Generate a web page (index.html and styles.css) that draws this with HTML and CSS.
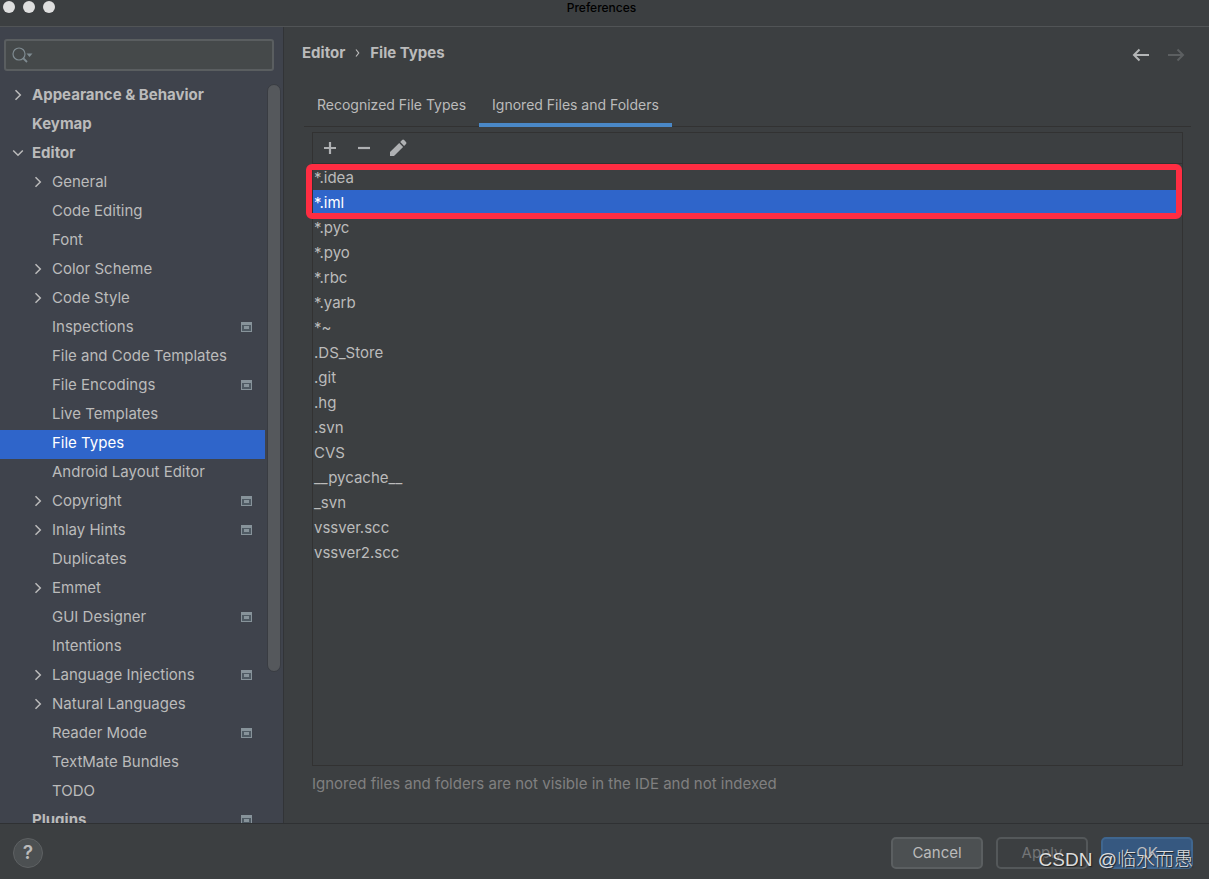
FILE: index.html
```html
<!DOCTYPE html>
<html lang="en">
<head>
<meta charset="utf-8">
<title>Preferences</title>
<link rel="stylesheet" href="styles.css">
</head>
<body>
<svg class="defs" aria-hidden="true">
  <symbol id="chev" viewBox="0 0 12 12"><path d="M3.5 1.2 8.3 6 3.5 10.8" fill="none" stroke="currentColor" stroke-width="1.5"/></symbol>
  <symbol id="chev-down" viewBox="0 0 12 12"><path d="M1.2 3.5 6 8.3 10.8 3.5" fill="none" stroke="currentColor" stroke-width="1.5"/></symbol>
  <symbol id="proj" viewBox="0 0 11 10"><path fill="#87939a" fill-rule="evenodd" d="M0 0h11v10H0zM1 3v6h9V3z"/><path fill="#4f5a63" d="M1 3h9v6H1z"/><path fill="#87939a" d="M3 4h5v3H3z"/></symbol>
</svg>
<header class="titlebar">
  <div class="lights"><span class="light"></span><span class="light"></span><span class="light"></span></div>
  <h1 class="title">Preferences</h1>
</header>
<div class="body">
  <aside class="sidebar">
    <label class="search">
      <svg class="search-icon" viewBox="0 0 22 16" aria-hidden="true"><g fill="none" stroke="#7f8b91" stroke-width="1.2"><circle cx="7" cy="7" r="6"/><path d="m11 11 4 4" stroke-width="1.8"/></g><path d="M14.500 6.500h6L17.500 10z" fill="#7f8b91"/></svg>
      <input class="search-input" type="text" aria-label="Search settings">
    </label>
    <div class="tree-wrap">
      <nav class="tree" aria-label="Settings">
        <a href="#" class="row top"><svg class="chev"><use href="#chev"/></svg><span>Appearance &amp; Behavior</span></a>
        <a href="#" class="row top"><i class="chev"></i><span>Keymap</span></a>
        <a href="#" class="row top"><svg class="chev"><use href="#chev-down"/></svg><span>Editor</span></a>
        <a href="#" class="row"><svg class="chev"><use href="#chev"/></svg><span>General</span></a>
        <a href="#" class="row"><i class="chev"></i><span>Code Editing</span></a>
        <a href="#" class="row"><i class="chev"></i><span>Font</span></a>
        <a href="#" class="row"><svg class="chev"><use href="#chev"/></svg><span>Color Scheme</span></a>
        <a href="#" class="row"><svg class="chev"><use href="#chev"/></svg><span>Code Style</span></a>
        <a href="#" class="row"><i class="chev"></i><span>Inspections</span><svg class="proj"><use href="#proj"/></svg></a>
        <a href="#" class="row"><i class="chev"></i><span>File and Code Templates</span></a>
        <a href="#" class="row"><i class="chev"></i><span>File Encodings</span><svg class="proj"><use href="#proj"/></svg></a>
        <a href="#" class="row"><i class="chev"></i><span>Live Templates</span></a>
        <a href="#" class="row selected" aria-current="page"><i class="chev"></i><span>File Types</span></a>
        <a href="#" class="row"><i class="chev"></i><span>Android Layout Editor</span></a>
        <a href="#" class="row"><svg class="chev"><use href="#chev"/></svg><span>Copyright</span><svg class="proj"><use href="#proj"/></svg></a>
        <a href="#" class="row"><svg class="chev"><use href="#chev"/></svg><span>Inlay Hints</span><svg class="proj"><use href="#proj"/></svg></a>
        <a href="#" class="row"><i class="chev"></i><span>Duplicates</span></a>
        <a href="#" class="row"><svg class="chev"><use href="#chev"/></svg><span>Emmet</span></a>
        <a href="#" class="row"><i class="chev"></i><span>GUI Designer</span><svg class="proj"><use href="#proj"/></svg></a>
        <a href="#" class="row"><i class="chev"></i><span>Intentions</span></a>
        <a href="#" class="row"><svg class="chev"><use href="#chev"/></svg><span>Language Injections</span><svg class="proj"><use href="#proj"/></svg></a>
        <a href="#" class="row"><svg class="chev"><use href="#chev"/></svg><span>Natural Languages</span></a>
        <a href="#" class="row"><i class="chev"></i><span>Reader Mode</span><svg class="proj"><use href="#proj"/></svg></a>
        <a href="#" class="row"><i class="chev"></i><span>TextMate Bundles</span></a>
        <a href="#" class="row"><i class="chev"></i><span>TODO</span></a>
        <a href="#" class="row top"><i class="chev"></i><span>Plugins</span><svg class="proj"><use href="#proj"/></svg></a>
      </nav>
      <div class="track"><div class="thumb"></div></div>
    </div>
  </aside>
  <main class="content">
    <div class="heading">
      <div class="crumbs"><span>Editor</span><svg class="crumb-sep" viewBox="0 0 5 8"><path d="M1 .5 3.700 4 1 7.500" fill="none" stroke="#bbb" stroke-width="1.200"/></svg><span>File Types</span></div>
      <div class="history">
        <button class="nav-btn" aria-label="Back"><svg viewBox="0 0 18 14"><path d="M17 7H2M7.500 1.500 2 7l5.500 5.500" fill="none" stroke="#b4b6b7" stroke-width="2"/></svg></button>
        <button class="nav-btn" aria-label="Forward" disabled><svg viewBox="0 0 18 14"><path d="M1 7h15M10.500 1.500 16 7l-5.500 5.500" fill="none" stroke="#5c5f61" stroke-width="2"/></svg></button>
      </div>
    </div>
    <div class="tabs" role="tablist">
      <button class="tab" role="tab">Recognized File Types</button>
      <button class="tab active" role="tab" aria-selected="true">Ignored Files and Folders</button>
    </div>
    <section class="panel">
      <div class="toolbar">
        <button class="tool" aria-label="Add"><svg viewBox="0 0 18 18"><path d="M9 3v12M3 9h12" stroke="#afb1b3" stroke-width="2.200"/></svg></button>
        <button class="tool" aria-label="Remove"><svg viewBox="0 0 18 18"><path d="M3 9h12" stroke="#afb1b3" stroke-width="2.200"/></svg></button>
        <button class="tool" aria-label="Edit"><svg viewBox="0 0 18 18"><path fill="#afb1b3" d="M1 17v-4L10.200 4l3.900 3.900L5 17zM11.200 3l1.900-1.900q1-1 2 0l1.900 1.900q1 1 0 2L15.100 6.900z"/></svg></button>
      </div>
      <ul class="list">
        <li class="item">*.idea</li>
        <li class="item selected">*.iml</li>
        <li class="item">*.pyc</li>
        <li class="item">*.pyo</li>
        <li class="item">*.rbc</li>
        <li class="item">*.yarb</li>
        <li class="item">*~</li>
        <li class="item">.DS_Store</li>
        <li class="item">.git</li>
        <li class="item">.hg</li>
        <li class="item">.svn</li>
        <li class="item">CVS</li>
        <li class="item">__pycache__</li>
        <li class="item">_svn</li>
        <li class="item">vssver.scc</li>
        <li class="item">vssver2.scc</li>
      </ul>
      <div class="callout"></div>
    </section>
    <p class="hint">Ignored files and folders are not visible in the IDE and not indexed</p>
  </main>
</div>
<footer class="footer">
  <button class="help" aria-label="Help">?</button>
  <div class="actions">
    <button class="btn">Cancel</button>
    <button class="btn apply" disabled>Apply</button>
    <button class="btn ok">OK</button>
  </div>
  <div class="watermark">CSDN @临水而愚</div>
</footer>
</body>
</html>
```

FILE: styles.css
```css
* { box-sizing: border-box; }
body {
  margin: 0;
  height: 100vh;
  display: flex;
  flex-direction: column;
  overflow: hidden;
  background: #3c3f41;
  color: #bbbbbb;
  font: 15px/18px Inter, "Liberation Sans", sans-serif;
}
button { font: inherit; color: inherit; background: none; border: 0; padding: 0; }
.defs { display: none; }

.titlebar {
  position: relative;
  flex: none;
  height: 27px;
  border-bottom: 1px solid #515456;
}
.lights { position: absolute; left: 3px; top: 1px; display: flex; gap: 8px; }
.light { width: 12px; height: 12px; border-radius: 50%; background: #dfdfdf; }
.title { margin: 0; padding-right: 6px; text-align: center; color: #000; font-size: 12px; font-weight: 500; line-height: 16px; }

.body { flex: 1; min-height: 0; display: flex; }
.sidebar {
  flex: none;
  width: 284px;
  display: flex;
  flex-direction: column;
  background: #3f434c;
  border-right: 1px solid #323437;
}
.search {
  flex: none;
  display: flex;
  align-items: center;
  height: 32px;
  margin: 12px 9px 0 4px;
  padding: 0 6px;
  gap: 4px;
  background: #45494a;
  border: 2px solid #5a5e60;
  border-radius: 3px;
}
.search-icon { flex: none; width: 22px; height: 16px; }
.search-input { flex: 1; min-width: 0; background: none; border: 0; outline: 0; color: #bbb; font: inherit; }
.tree-wrap { flex: 1; min-height: 0; display: flex; margin-top: 11px; }
.tree { flex: 1; min-width: 0; overflow: hidden; }
.row {
  display: flex;
  align-items: center;
  height: 29px;
  padding: 0 13px 4px 32px;
  color: #bbbbbb;
  text-decoration: none;
  white-space: nowrap;
}
.row.top { padding-left: 12px; font-weight: 700; }
.row.selected { background: #2f65ca; color: #fff; }
.chev { flex: none; width: 12px; height: 12px; margin-right: 8px; }
.proj { flex: none; width: 11px; height: 10px; margin-left: auto; }
.track { flex: none; width: 18px; padding: 2px 2px 4px; }
.thumb { width: 14px; height: 80%; background: #55585c; border: 1px solid #393c42; border-radius: 7px; }

.content {
  flex: 1;
  min-width: 0;
  display: flex;
  flex-direction: column;
  padding: 17px 18px 30px;
}
.heading { display: flex; justify-content: space-between; align-items: center; padding-right: 6px; font-weight: 700; }
.crumbs { display: flex; align-items: center; gap: 10px; }
.crumb-sep { width: 5px; height: 8px; }
.history { display: flex; gap: 17px; }
.nav-btn { width: 18px; height: 18px; display: flex; align-items: flex-end; }
.nav-btn svg { width: 18px; height: 14px; }
.tabs { display: flex; margin: 24px 0 0 2px; border-bottom: 1px solid #323232; font-size: 14px; }
.tab { height: 41px; padding: 0 13px; margin-bottom: -1px; border-bottom: 4px solid transparent; }
.tab.active { border-color: #4a88c7; }
.panel {
  position: relative;
  flex: 1;
  min-height: 0;
  margin: 5px 8px 0 10px;
  border: 1px solid #323232;
}
.toolbar { display: flex; align-items: center; gap: 16px; height: 31px; padding-left: 8px; border-bottom: 1px solid #323232; }
.tool { width: 18px; height: 18px; }
.tool svg { display: block; width: 18px; height: 18px; }
.list { list-style: none; margin: 1px 0 0; padding: 0; }
.item { height: 25px; padding-left: 1px; line-height: 25px; }
.item.selected { background: #2f65ca; color: #fff; }
.callout {
  position: absolute;
  left: -7px;
  right: 0;
  top: 31px;
  height: 55px;
  border: 6px solid #ff2d42;
  border-radius: 6px;
}
.hint { margin: 9px 0 0 10px; color: #808080; }

.footer {
  position: relative;
  flex: none;
  display: flex;
  align-items: center;
  justify-content: space-between;
  height: 56px;
  padding: 3px 16px 0 13px;
  border-top: 1px solid #2f3133;
}
.help { width: 30px; height: 30px; border: 1px solid #5e6163; border-radius: 50%; background: #4c5052; font-size: 19px; font-weight: 600; }
.actions { display: flex; gap: 13px; }
.btn { width: 92px; height: 32px; border: 2px solid #5b5f61; border-radius: 5px; background: #4c5052; }
.btn.apply { background: none; border-color: #54585a; color: #737577; }
.btn.ok { background: #365880; border-color: #3f668f; }
.watermark {
  position: absolute;
  right: 16px;
  bottom: 5px;
  color: #dcdcdc;
  font: 300 19px/28px "Liberation Sans", "Noto Sans CJK SC", sans-serif;
  text-shadow: 1px 1px 1px #222;
}
```
